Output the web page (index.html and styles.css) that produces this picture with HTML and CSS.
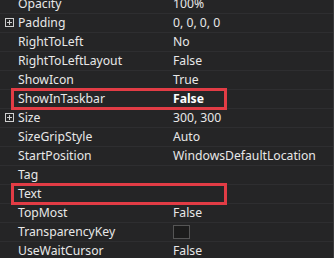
FILE: index.html
```html
<!DOCTYPE html>
<html lang="en">
<head>
    <meta charset="UTF-8">
    <title>Properties</title>
    <link rel="stylesheet" href="styles.css">
</head>
<body>
    <div class="grid">
        <div class="row"><span class="name">Opacity</span><span class="value">100%</span></div>
        <div class="row"><span class="expander"></span><span class="name">Padding</span><span class="value">0, 0, 0, 0</span></div>
        <div class="row"><span class="name">RightToLeft</span><span class="value">No</span></div>
        <div class="row"><span class="name">RightToLeftLayout</span><span class="value">False</span></div>
        <div class="row"><span class="name">ShowIcon</span><span class="value">True</span></div>
        <div class="row marked"><span class="name">ShowInTaskbar</span><span class="value bold">False</span></div>
        <div class="row"><span class="expander"></span><span class="name">Size</span><span class="value">300, 300</span></div>
        <div class="row"><span class="name">SizeGripStyle</span><span class="value">Auto</span></div>
        <div class="row"><span class="name">StartPosition</span><span class="value">WindowsDefaultLocation</span></div>
        <div class="row"><span class="name">Tag</span><span class="value"></span></div>
        <div class="row marked"><span class="name">Text</span><span class="value"></span></div>
        <div class="row"><span class="name">TopMost</span><span class="value">False</span></div>
        <div class="row"><span class="name">TransparencyKey</span><span class="value"><span class="swatch"></span></span></div>
        <div class="row"><span class="name">UseWaitCursor</span><span class="value">False</span></div>
    </div>
</body>
</html>
```

FILE: styles.css
```css
html, body {
    margin: 0;
    padding: 0;
    background: #252526;
    overflow: hidden;
}
.grid {
    font-family: 'Noto Sans', 'Noto Sans CJK SC', sans-serif;
    font-size: 12.2px;
    color: #e8e8e8;
    margin-top: -5px;
    width: 333px;
    border-right: 1px solid #3a3a3c;
}
.row {
    position: relative;
    display: flex;
    height: 18px;
    line-height: 18px;
    border-bottom: 1px solid #2e2e30;
}
.name {
    width: 155px;
    padding-left: 18px;
    white-space: nowrap;
}
.value {
    flex: 1;
    white-space: nowrap;
    display: flex;
    align-items: center;
}
.bold {
    font-weight: bold;
    color: #fff;
}
.expander {
    position: absolute;
    left: 5px;
    top: 4px;
    width: 9px;
    height: 9px;
    box-sizing: border-box;
    border: 1px solid #d0d0d0;
}
.expander::before,
.expander::after {
    content: '';
    position: absolute;
    background: #d0d0d0;
}
.expander::before {
    left: 1px;
    top: 3px;
    width: 5px;
    height: 1px;
}
.expander::after {
    left: 3px;
    top: 1px;
    width: 1px;
    height: 5px;
}
.marked::after {
    content: '';
    position: absolute;
    left: 11px;
    top: -2px;
    width: 216px;
    bottom: -2px;
    box-sizing: border-box;
    border: 3px solid #e23c45;
}
.swatch {
    display: inline-block;
    width: 17px;
    height: 14px;
    background: #1c1c1c;
    border: 1px solid #555;
    box-sizing: border-box;
}
```
